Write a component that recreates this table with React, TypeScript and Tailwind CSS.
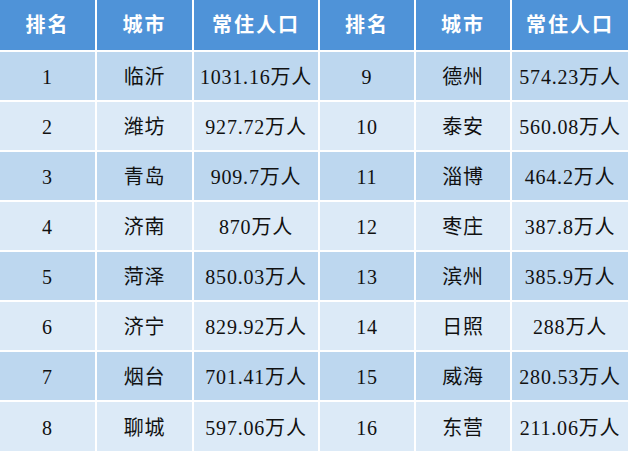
const rows: [string, string, string, string, string, string][] = [
  ['1', '临沂', '1031.16万人', '9', '德州', '574.23万人'],
  ['2', '潍坊', '927.72万人', '10', '泰安', '560.08万人'],
  ['3', '青岛', '909.7万人', '11', '淄博', '464.2万人'],
  ['4', '济南', '870万人', '12', '枣庄', '387.8万人'],
  ['5', '菏泽', '850.03万人', '13', '滨州', '385.9万人'],
  ['6', '济宁', '829.92万人', '14', '日照', '288万人'],
  ['7', '烟台', '701.41万人', '15', '威海', '280.53万人'],
  ['8', '聊城', '597.06万人', '16', '东营', '211.06万人'],
]

const headers = ['排名', '城市', '常住人口', '排名', '城市', '常住人口']

const font = "font-['Liberation_Serif','Noto_Sans_CJK_SC',serif]"

export default function App() {
  return (
    <div className="h-[451px] w-[628px] bg-white">
      <div
        className={`grid h-full grid-cols-[95px_95px_124px_94px_94px_1fr] grid-rows-[50px_repeat(7,48px)_1fr] gap-[2px] ${font}`}
      >
        {headers.map((h, i) => (
          <div
            key={'h' + i}
            className="flex items-center justify-center bg-[#4f93d8] text-[20px] font-bold tracking-[2px] text-white"
          >
            {h}
          </div>
        ))}
        {rows.map((r, ri) =>
          r.map((c, ci) => (
            <div
              key={ri + '-' + ci}
              className={`flex items-center justify-center whitespace-nowrap pt-[2px] text-[20px] tracking-[0.8px] text-[#111] ${
                ri % 2 === 0 ? 'bg-[#bdd7ef]' : 'bg-[#dceaf7]'
              }`}
            >
              {c}
            </div>
          )),
        )}
      </div>
    </div>
  )
}
